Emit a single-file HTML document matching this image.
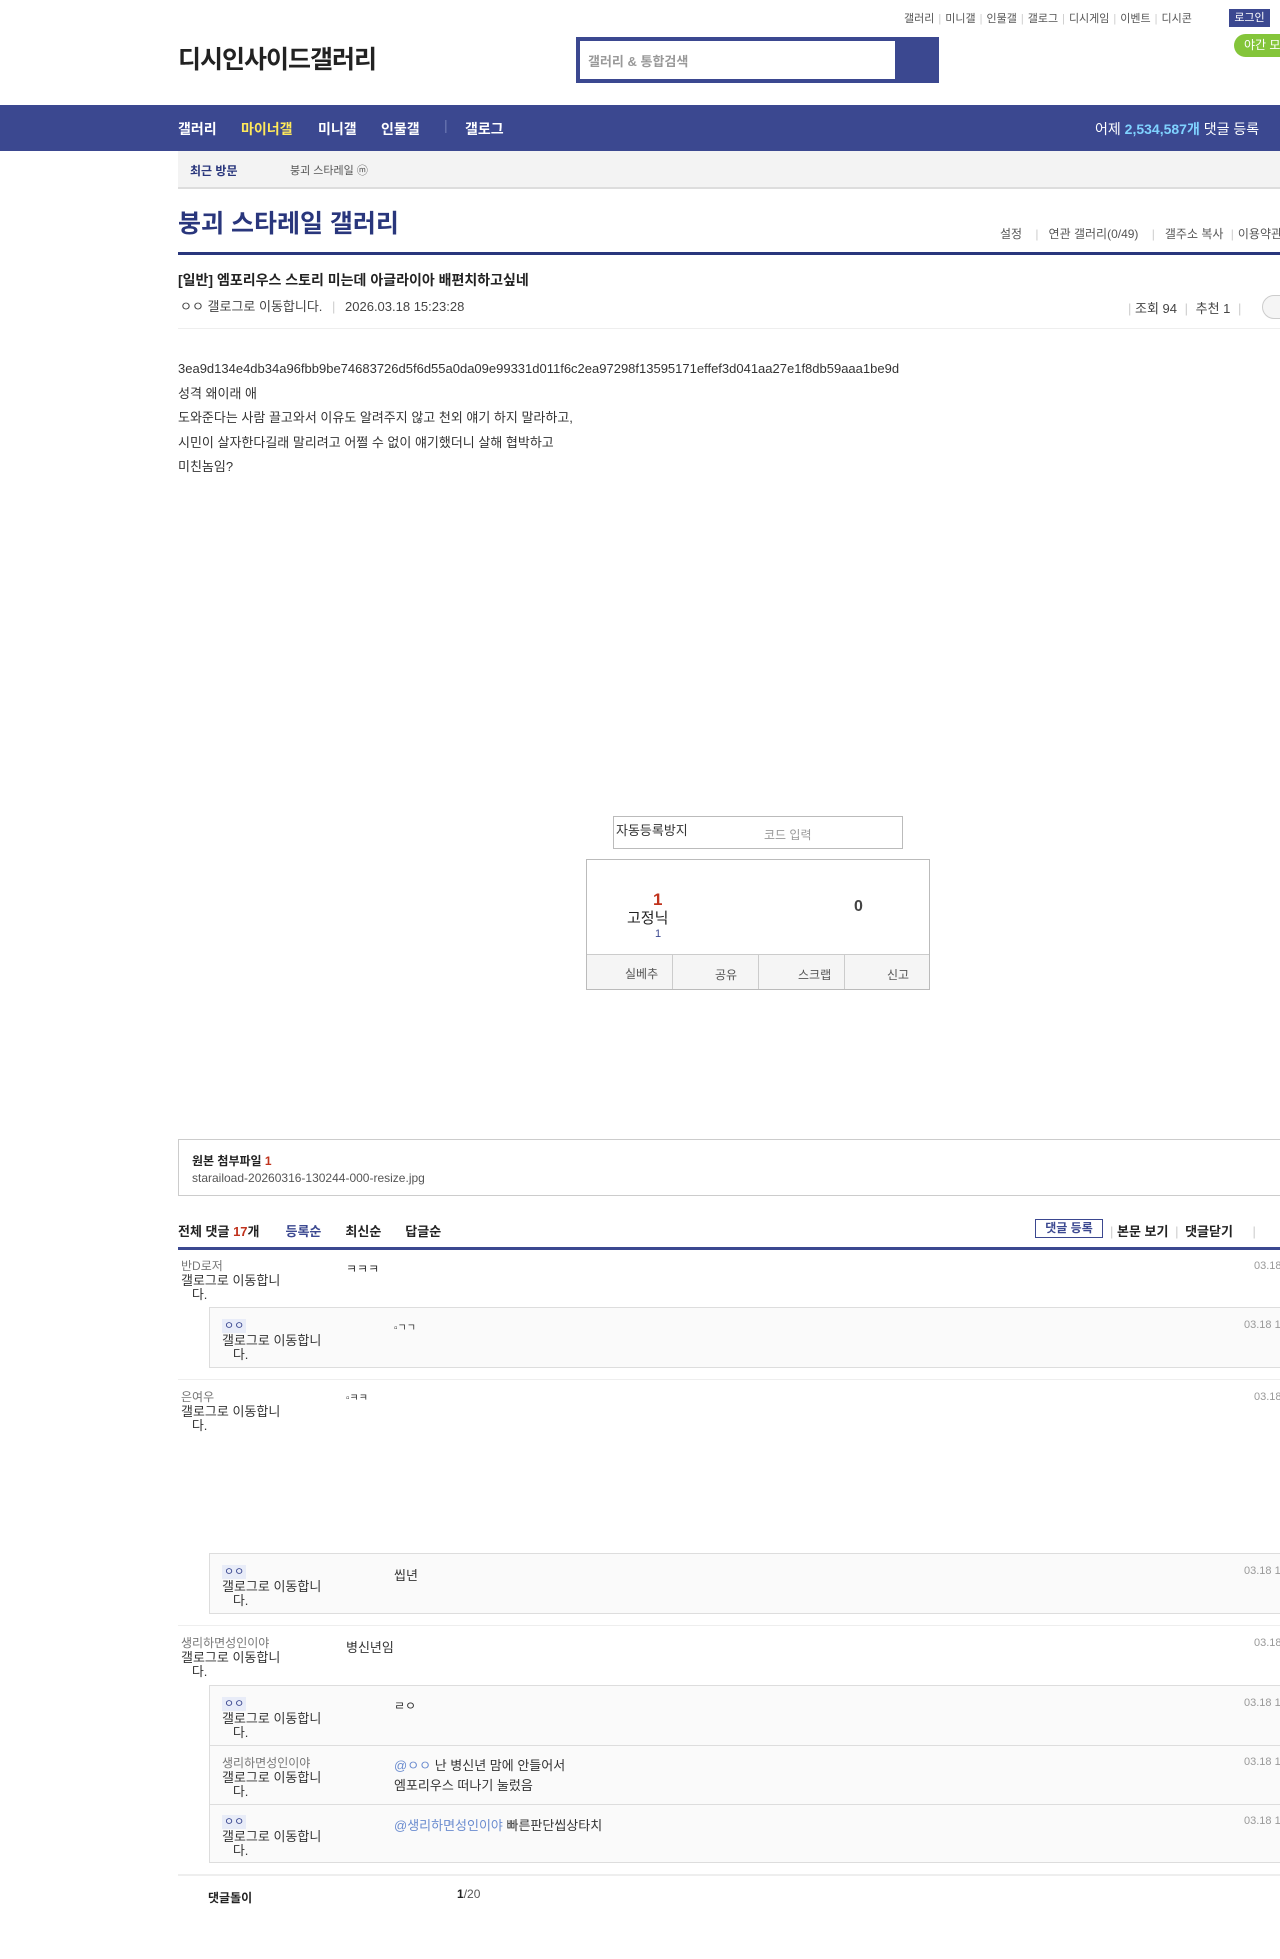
<!DOCTYPE html>
<html><head><meta charset="utf-8"><style>
*{margin:0;padding:0;box-sizing:border-box}
body{width:1280px;height:1959px;overflow:hidden;background:#fff;font-family:"Liberation Sans","Noto Sans CJK KR",sans-serif;font-size:13px;color:#333;position:relative}
.a{position:absolute;white-space:nowrap}
.toplinks{top:10px;left:904px;font-size:11px;color:#555}
.toplinks span.s{color:#ccc;margin:0 4px}
.login{top:9px;left:1229px;width:41px;height:18px;background:#3b4890;color:#fff;font-size:11px;text-align:center;line-height:18px}
.night{top:34px;left:1234px;width:60px;height:23px;background:#84c53a;border-radius:12px;color:#fff;font-size:12px;line-height:23px;padding-left:10px}
.nav{top:105px;left:0;width:1280px;height:46px;background:#3b4890}
.nav span{position:absolute;top:14px;color:#fff;font-weight:bold;font-size:14px}
.sub{top:151px;left:178px;width:1110px;height:38px;background:#f3f3f3;border-bottom:2px solid #ddd}
.ibox{border:1px solid #ccc;background:#fff}
.nick{font-size:12px;color:#777;line-height:14px}
.glog{font-size:13px;color:#333;line-height:14px}
.date{position:absolute;font-size:11px;color:#999}
.rep{position:absolute;left:209px;width:1080px;background:#fafafa;border:1px solid #ddd}
.oo{background:#e8ecf8;color:#3b4890;font-size:11px;padding:0 2px;line-height:14px}
.hr{position:absolute;left:178px;width:1110px;height:1px;background:#eee}
</style></head><body>
<div class="a toplinks" style="left:904px">갤러리<span class="s">|</span>미니갤<span class="s">|</span>인물갤<span class="s">|</span>갤로그<span class="s">|</span>디시게임<span class="s">|</span>이벤트<span class="s">|</span>디시콘</div>
<div class="a login">로그인</div>
<div class="a night">야간 모드</div>
<div class="a" style="top:40px;left:178px;font-size:25px;color:#222;font-weight:bold;letter-spacing:-1px">디시인사이드갤러리</div>
<div class="a" style="top:37px;left:576px;width:363px;height:46px;background:#3b4890"></div>
<div class="a" style="top:41px;left:580px;width:315px;height:38px;background:#fff;color:#999;font-size:13px;padding:10px 8px;font-weight:bold">갤러리 &amp; 통합검색</div>
<div class="a nav">
<span style="left:178px">갤러리</span><span style="left:241px;color:#ffe95a">마이너갤</span><span style="left:318px">미니갤</span><span style="left:381px">인물갤</span><span style="left:444px;top:12px;color:#6f7bb5;font-weight:normal">|</span><span style="left:465px">갤로그</span>
<span style="left:1095px;font-weight:normal;font-size:14px">어제 <b style="color:#7fd2ff">2,534,587개</b> 댓글 등록</span>
</div>
<div class="a sub"><span class="a" style="left:12px;top:11px;font-size:12px;font-weight:bold;color:#29367c">최근 방문</span><span class="a" style="left:112px;top:11px;font-size:11px;color:#555">붕괴 스타레일 ⓜ</span></div>
<div class="a" style="top:204px;left:178px;font-size:25px;color:#29367c;font-weight:bold">붕괴 스타레일 갤러리</div>
<div class="a" style="top:225px;left:1000px;font-size:12px;color:#555">설정 <span style="color:#ccc;margin:0 10px">|</span>연관 갤러리(0/49) <span style="color:#ccc;margin:0 10px">|</span>갤주소 복사 <span style="color:#ccc;margin:0 4px">|</span>이용약관</div>
<div class="a" style="top:252px;left:178px;width:1110px;height:3px;background:#29367c"></div>
<div class="a" style="top:270px;left:178px;font-size:14px;font-weight:bold;color:#222">[일반] 엠포리우스 스토리 미는데 아글라이아 배편치하고싶네</div>
<div class="a" style="top:296px;left:180px;font-size:13px;color:#444">ㅇㅇ 갤로그로 이동합니다. <span style="color:#ccc;margin:0 6px">|</span> 2026.03.18 15:23:28</div>
<div class="a" style="top:298px;left:1128px;font-size:13px;color:#444"><span style="color:#ccc">|</span> 조회 94 <span style="color:#ccc;margin:0 4px">|</span> 추천 1 <span style="color:#ccc;margin:0 4px">|</span></div>
<div class="a" style="top:295px;left:1262px;width:30px;height:24px;border:1px solid #ccc;border-radius:12px;background:#f5f5f5"></div>
<div class="a" style="top:328px;left:178px;width:1110px;height:1px;background:#eee"></div>
<div class="a" style="top:357px;left:178px;font-size:13px;line-height:24.5px;color:#333">
3ea9d134e4db34a96fbb9be74683726d5f6d55a0da09e99331d011f6c2ea97298f13595171effef3d041aa27e1f8db59aaa1be9d<br>성격 왜이래 애<br>도와준다는 사람 끌고와서 이유도 알려주지 않고 천외 얘기 하지 말라하고,<br>시민이 살자한다길래 말리려고 어쩔 수 없이 얘기했더니 살해 협박하고<br>미친놈임?</div>
<div class="a ibox" style="top:816px;left:613px;width:290px;height:33px;border-color:#bbb"><span class="a" style="left:2px;top:3px;font-size:13px">자동등록방지</span><span class="a" style="left:150px;top:9px;font-size:12px;color:#999">코드 입력</span></div>
<div class="a ibox" style="top:859px;left:586px;width:344px;height:131px;border-color:#bbb">
<span class="a" style="left:66px;top:30px;font-size:17px;font-weight:bold;color:#c0321c">1</span>
<span class="a" style="left:40px;top:47px;font-size:15px;color:#222">고정닉</span>
<span class="a" style="left:68px;top:68px;font-size:11px;color:#3b4890">1</span>
<span class="a" style="left:267px;top:38px;font-size:16px;font-weight:bold;color:#444">0</span>
<div class="a" style="left:0;top:94px;width:342px;height:35px;background:#f5f5f5;border-top:1px solid #ccc"></div>
<div class="a" style="left:85px;top:94px;width:1px;height:35px;background:#ccc"></div>
<div class="a" style="left:171px;top:94px;width:1px;height:35px;background:#ccc"></div>
<div class="a" style="left:257px;top:94px;width:1px;height:35px;background:#ccc"></div>
<span class="a" style="left:38px;top:105px;font-size:12px;color:#555">실베추</span><span class="a" style="left:128px;top:106px;font-size:12px;color:#555">공유</span><span class="a" style="left:211px;top:106px;font-size:12px;color:#555">스크랩</span><span class="a" style="left:300px;top:106px;font-size:12px;color:#555">신고</span>
</div>
<div class="a ibox" style="top:1139px;left:178px;width:1110px;height:57px;border-color:#ccc"><span class="a" style="left:13px;top:12px;font-size:12px;font-weight:bold;color:#222">원본 첨부파일 <span style="color:#c0321c">1</span></span><span class="a" style="left:13px;top:31px;font-size:12px;color:#555">staraiload-20260316-130244-000-resize.jpg</span></div>
<div class="a" style="top:1221px;left:178px;font-size:13px;font-weight:bold;color:#222">전체 댓글 <span style="color:#c0321c">17</span>개<span style="color:#3b4890;margin-left:26px">등록순</span><span style="margin-left:24px">최신순</span><span style="margin-left:24px">답글순</span></div>
<div class="a" style="top:1219px;left:1035px;width:68px;height:19px;border:1px solid #3b4890;font-size:12px;font-weight:bold;color:#3b4890;text-align:center;line-height:17px">댓글 등록</div>
<div class="a" style="top:1221px;left:1110px;font-size:13px;font-weight:bold;color:#222"><span style="color:#ccc;font-weight:normal">|</span> 본문 보기 <span style="color:#ccc;font-weight:normal;margin:0 3px">|</span> 댓글닫기 <span style="color:#ccc;font-weight:normal;margin-left:16px">|</span></div>
<div class="a" style="top:1247px;left:178px;width:1110px;height:3px;background:#3b4890"></div>

<div class="a nick" style="top:1259px;left:181px">반D로저</div>
<div class="a glog" style="top:1274px;left:181px">갤로그로 이동합니<br>&nbsp;&nbsp;&nbsp;다.</div>
<div class="a" style="top:1260px;left:346px;font-size:12px">ㅋㅋㅋ</div>
<div class="date" style="top:1260px;left:1254px">03.18</div>
<div class="rep" style="top:1307px;height:61px"><span class="a oo" style="left:12px;top:11px">ㅇㅇ</span><span class="a glog" style="left:12px;top:26px">갤로그로 이동합니<br>&nbsp;&nbsp;&nbsp;다.</span><span class="a" style="left:184px;top:11px;font-size:10px">▫ㄱㄱ</span><span class="date" style="left:1034px;top:11px">03.18 1</span></div>
<div class="hr" style="top:1379px"></div>
<div class="a nick" style="top:1390px;left:181px">은여우</div>
<div class="a glog" style="top:1405px;left:181px">갤로그로 이동합니<br>&nbsp;&nbsp;&nbsp;다.</div>
<div class="a" style="top:1389px;left:346px;font-size:10px">▫ㅋㅋ</div>
<div class="date" style="top:1391px;left:1254px">03.18</div>
<div class="rep" style="top:1553px;height:61px"><span class="a oo" style="left:12px;top:11px">ㅇㅇ</span><span class="a glog" style="left:12px;top:26px">갤로그로 이동합니<br>&nbsp;&nbsp;&nbsp;다.</span><span class="a" style="left:184px;top:11px;font-size:13px">씹년</span><span class="date" style="left:1034px;top:11px">03.18 1</span></div>
<div class="hr" style="top:1625px"></div>
<div class="a nick" style="top:1636px;left:181px">생리하면성인이야</div>
<div class="a glog" style="top:1651px;left:181px">갤로그로 이동합니<br>&nbsp;&nbsp;&nbsp;다.</div>
<div class="a" style="top:1637px;left:346px;font-size:13px">병신년임</div>
<div class="date" style="top:1637px;left:1254px">03.18</div>
<div class="rep" style="top:1685px;height:178px">
<span class="a oo" style="left:12px;top:11px">ㅇㅇ</span><span class="a glog" style="left:12px;top:26px">갤로그로 이동합니<br>&nbsp;&nbsp;&nbsp;다.</span><span class="a" style="left:184px;top:11px;font-size:12px">ㄹㅇ</span><span class="date" style="left:1034px;top:11px">03.18 1</span>
<div class="a" style="left:0;top:59px;width:1080px;height:1px;background:#ddd"></div>
<span class="a nick" style="left:12px;top:70px">생리하면성인이야</span><span class="a glog" style="left:12px;top:85px">갤로그로 이동합니<br>&nbsp;&nbsp;&nbsp;다.</span><span class="a" style="left:184px;top:70px;font-size:13px;line-height:20px"><span style="color:#6b8ccf">@ㅇㅇ</span> 난 병신년 맘에 안들어서<br>엠포리우스 떠나기 눌렀음</span><span class="date" style="left:1034px;top:70px">03.18 1</span>
<div class="a" style="left:0;top:118px;width:1080px;height:1px;background:#ddd"></div>
<span class="a oo" style="left:12px;top:129px">ㅇㅇ</span><span class="a glog" style="left:12px;top:144px">갤로그로 이동합니<br>&nbsp;&nbsp;&nbsp;다.</span><span class="a" style="left:184px;top:129px;font-size:13px"><span style="color:#6b8ccf">@생리하면성인이야</span> 빠른판단씹상타치</span><span class="date" style="left:1034px;top:129px">03.18 1</span>
</div>
<div class="hr" style="top:1874px;height:2px"></div>
<div class="a" style="top:1889px;left:208px;font-size:12px;font-weight:bold;color:#222">댓글돌이</div>
<div class="a" style="top:1887px;left:457px;font-size:12px;color:#555"><b style="color:#222">1</b>/20</div>
</body></html>
